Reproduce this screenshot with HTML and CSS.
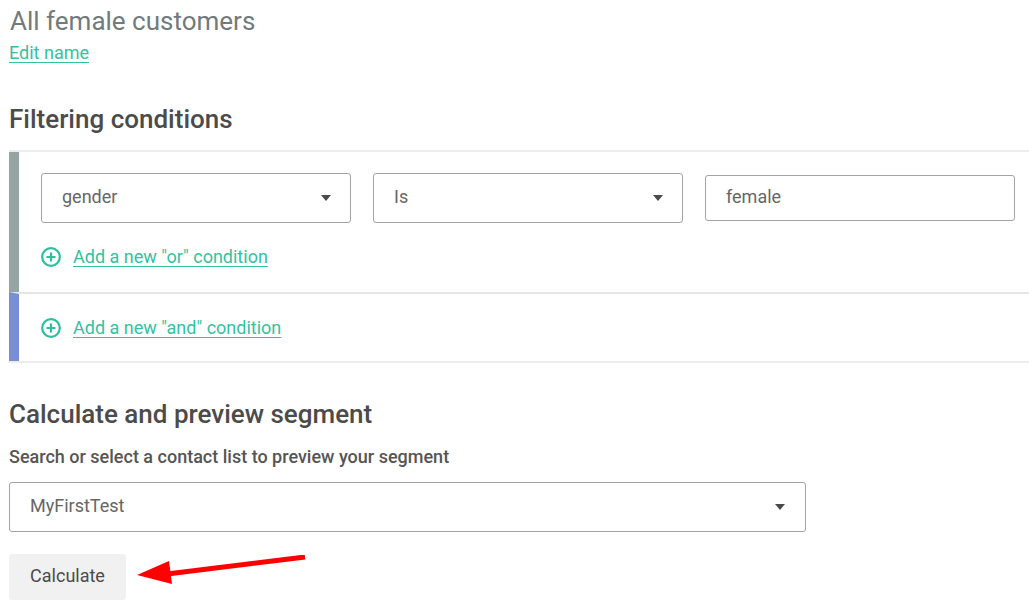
FILE: index.html
```html
<!DOCTYPE html>
<html>
<head>
<meta charset="utf-8">
<link rel="stylesheet" href="styles.css">
</head>
<body>
<div class="page">
  <h1 class="title">All female customers</h1>
  <a class="link edit" href="#">Edit name</a>

  <h2 class="heading filter-heading">Filtering conditions</h2>

  <div class="conditions">
    <div class="group group-or">
      <div class="row">
        <div class="select"><span>gender</span><span class="caret"></span></div>
        <div class="select"><span>Is</span><span class="caret"></span></div>
        <div class="input"><span>female</span></div>
      </div>
      <div class="add">
        <svg class="plus" width="20" height="20" viewBox="0 0 20 20"><circle cx="10" cy="10" r="8.8" fill="none" stroke="#2bbf9b" stroke-width="2.2"/><path d="M10 5.5v9M5.5 10h9" stroke="#2bbf9b" stroke-width="2.2"/></svg>
        <a class="link" href="#">Add a new "or" condition</a>
      </div>
    </div>
    <div class="group group-and">
      <div class="add">
        <svg class="plus" width="20" height="20" viewBox="0 0 20 20"><circle cx="10" cy="10" r="8.8" fill="none" stroke="#2bbf9b" stroke-width="2.2"/><path d="M10 5.5v9M5.5 10h9" stroke="#2bbf9b" stroke-width="2.2"/></svg>
        <a class="link" href="#">Add a new "and" condition</a>
      </div>
    </div>
  </div>

  <h2 class="heading calc-heading">Calculate and preview segment</h2>
  <div class="label">Search or select a contact list to preview your segment</div>
  <div class="select wide"><span>MyFirstTest</span><span class="caret"></span></div>
  <button class="btn">Calculate</button>

  <svg class="arrow" width="180" height="40" viewBox="0 0 180 40">
    <path d="M178 2 L40 19" stroke="#ff0000" stroke-width="5" stroke-linecap="butt"/>
    <path d="M10 20 L42 6 L45 29 Z" fill="#ff0000"/>
  </svg>
</div>
</body>
</html>
```

FILE: styles.css
```css
* { box-sizing: border-box; }
html, body { margin: 0; padding: 0; background: #fff; }
body { font-family: Roboto, "Noto Sans", sans-serif; }

.page {
  position: relative;
  padding: 0 0 20px 9px;
  width: 1029px;
  height: 615px;
  overflow: hidden;
}

.title {
  margin: 6px 0 0 1px;
  font-size: 26px;
  line-height: 30px;
  font-weight: 400;
  color: #717b7c;
}

.link {
  color: #33c29f;
  text-decoration: underline;
  text-underline-offset: 3px;
  text-decoration-thickness: 1px;
  font-size: 18px;
  line-height: 22px;
}

.edit {
  display: block;
  margin: 6px 0 0 0;
  width: max-content;
}

.heading {
  margin: 0;
  font-size: 26px;
  line-height: 30px;
  font-weight: 500;
  color: #4b4b4b;
}

.filter-heading { margin-top: 40px; }

.conditions {
  margin-top: 16px;
  border-top: 2px solid #ececec;
  border-bottom: 2px solid #ececec;
}

.group {
  border-left: 10px solid #95a5a3;
  padding-left: 22px;
}

.group-or {
  padding-top: 21px;
  padding-bottom: 24px;
}

.group-and {
  border-left-color: #7a8fd3;
  border-top: 2px solid #e6e6e6;
  padding-top: 23px;
  padding-bottom: 22px;
}

.row {
  display: flex;
  align-items: center;
  gap: 22px;
}

.select, .input {
  display: flex;
  align-items: center;
  justify-content: space-between;
  width: 310px;
  height: 50px;
  border: 1px solid #a3a3a3;
  border-radius: 3px;
  padding: 0 19px 4px 20px;
  font-size: 18px;
  color: #666;
}

.input { height: 46px; }

.caret {
  margin-top: 4px;
  width: 0;
  height: 0;
  border-left: 5px solid transparent;
  border-right: 5px solid transparent;
  border-top: 6px solid #4a4a4a;
}

.add {
  display: flex;
  align-items: center;
  gap: 12px;
}

.group-or .add { margin-top: 23px; }

.plus { display: block; }

.calc-heading { margin-top: 36px; }

.label {
  margin: 17px 0 0 0;
  font-size: 18px;
  line-height: 22px;
  font-weight: 500;
  color: #555;
}

.select.wide {
  margin-top: 14px;
  width: 797px;
  padding-left: 20px;
  padding-right: 20px;
}

.btn {
  display: block;
  margin-top: 22px;
  width: 117px;
  height: 46px;
  padding-bottom: 4px;
  border: none;
  border-radius: 3px;
  background: #f1f1f1;
  font-family: Roboto, "Noto Sans", sans-serif;
  font-size: 18px;
  color: #4b4b4b;
}

.arrow {
  position: absolute;
  left: 127px;
  top: 555px;
}
```
